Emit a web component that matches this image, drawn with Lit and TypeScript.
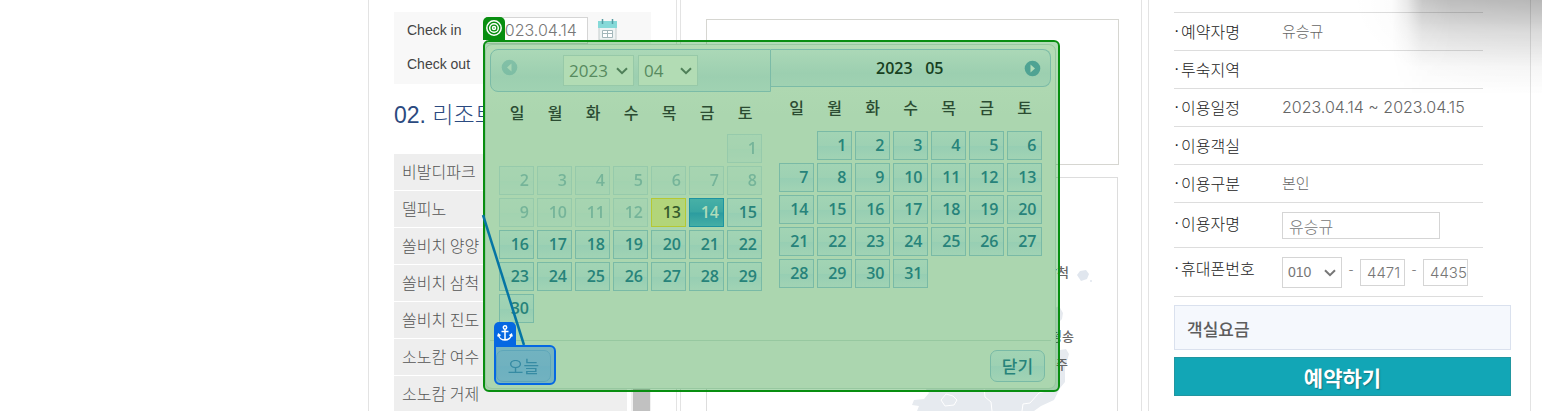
import { LitElement, html, svg, css, nothing } from "lit";
import { customElement, property } from "lit/decorators.js";

const WEEKDAYS = ["일", "월", "화", "수", "목", "금", "토"];

const chevron = html`<svg class="chevron" viewBox="0 0 12 8" aria-hidden="true"><path d="M1 1.2 6 6.2 11 1.2" /></svg>`;

@customElement("month-grid")
class MonthGrid extends LitElement {
  @property({ type: Number }) offset = 0;
  @property({ type: Number }) days = 30;
  @property({ type: Number }) today = 0;
  @property({ type: Number }) selected = 0;
  @property() label = "";

  static styles = css`
    :host { display: block; }
    table { table-layout: fixed; width: 266px; border-collapse: collapse; }
    th { height: 20px; padding: 0; font-weight: 500; font-size: 16px; line-height: 20px; color: #2b4c32; }
    td { height: 32px; padding: 0 2px 0 1px; vertical-align: top; }
    thead::after { content: ""; display: block; height: var(--head-gap, 12px); }
    .day {
      display: block; box-sizing: border-box; height: 29px; padding: 0 4px; text-align: right;
      border: 1px solid #79baa6; color: #27837a; text-decoration: none;
      font: 600 16px/27px "Open Sans", sans-serif;
      background: linear-gradient(#a2d4b4, #9dd1b3 50%, #96ceb3 51%, #a1d3b4);
    }
    .off { opacity: 0.4; }
    .today { background: #b2d57a; border-color: #b5c833; color: #355c2d; }
    .selected { background: linear-gradient(#47b0a6, #39a6a2 48%, #2c9c9f 52%, #45aea5); border-color: #1d93a1; color: #b0dcb9; }
  `;

  render() {
    const weeks = Math.ceil((this.offset + this.days) / 7);
    return html`<table aria-label=${this.label}>
      <thead><tr>${WEEKDAYS.map((d) => html`<th scope="col">${d}</th>`)}</tr></thead>
      <tbody>
        ${Array.from({ length: weeks }, (_, w) => html`<tr>
          ${WEEKDAYS.map((_d, i) => {
            const n = w * 7 + i - this.offset + 1;
            if (n < 1 || n > this.days) return html`<td></td>`;
            if (n < this.today) return html`<td><span class="day off">${n}</span></td>`;
            const kind = n === this.today ? "today" : n === this.selected ? "selected" : "";
            return html`<td><a class="day ${kind}" href="#">${n}</a></td>`;
          })}
        </tr>`)}
      </tbody>
    </table>`;
  }
}

@customElement("date-picker")
class DatePicker extends LitElement {
  static styles = css`
    :host { display: block; }
    .picker {
      box-sizing: border-box; height: 345px; padding: 4px; border: 1px solid #97c8a0; border-radius: 7px;
      display: flex; flex-direction: column; justify-content: space-between;
      background: linear-gradient(#b3dbb4, #abd6af 70px);
    }
    .months { display: grid; grid-template-columns: 1fr 1fr; align-items: start; }
    .bar {
      box-sizing: border-box; display: flex; align-items: center; border: 1px solid #7bbba7;
      background: linear-gradient(#abd8b7, #9ccfb0 65%, #a0d2b2);
    }
    .first { height: 43px; padding: 0 10px; gap: 4px; border-radius: 8px 0 0 8px; }
    .second { height: 38px; padding: 0 9px; border-left: 0; border-radius: 0 8px 8px 0; }
    .title { flex: 1; padding-left: 16px; text-align: center; white-space: pre; color: #17401f; font: 600 16px/20px "Open Sans", sans-serif; }
    .nav { width: 17px; height: 17px; padding: 0; border: 0; background: none; }
    .nav svg { display: block; }
    .prev { opacity: 0.4; align-self: flex-start; margin: 9px 41px 0 0; }
    .pick { position: relative; display: block; }
    .pick select {
      appearance: none; display: block; box-sizing: border-box; height: 31px; width: 71px; padding: 0 5px;
      border: 1px solid #97c9a8; border-radius: 0; background: #b2dcb4; color: #578a5f; font: 17px/29px "Open Sans", sans-serif;
    }
    .pick .narrow { width: 60px; }
    .chevron { position: absolute; right: 6px; top: 12px; width: 12px; height: 8px; fill: none; stroke: #4f7f58; stroke-width: 2; pointer-events: none; }
    .grid-a { padding: 10px 0 0 8px; --head-gap: 12px; }
    .grid-b { padding: 10px 0 0 7px; --head-gap: 14px; }
    .foot { display: flex; justify-content: space-between; padding: 9px 6px 2px; border-top: 1px solid #97c8a0; }
    .foot button {
      box-sizing: border-box; width: 55px; height: 32px; padding: 0; border: 1px solid #79baa6; border-radius: 7px;
      color: #27837a; font: 500 17px/28px "Noto Sans CJK KR", sans-serif;
      background: linear-gradient(#a2d4b4, #9dd1b3 50%, #96ceb3 51%, #a1d3b4);
    }
    .foot .now { font-weight: 400; opacity: 0.7; }
  `;

  arrow(d: string) {
    return html`<svg width="17" height="17" viewBox="0 0 17 17" aria-hidden="true"><circle cx="8.500" cy="8.500" r="7.800" fill="#4fa393" /><path d=${d} fill="#b2dcb8" /></svg>`;
  }

  render() {
    return html`<div class="picker">
      <div class="months">
        <section>
          <div class="bar first">
            <button class="nav prev" aria-label="이전 달">${this.arrow("M10.500 4.500v8L6 8.500z")}</button>
            <label class="pick"><select aria-label="년"><option>2023</option></select>${chevron}</label>
            <label class="pick"><select class="narrow" aria-label="월"><option>04</option></select>${chevron}</label>
          </div>
          <month-grid class="grid-a" label="2023 04" .offset=${6} .days=${30} .today=${13} .selected=${14}></month-grid>
        </section>
        <section>
          <div class="bar second">
            <div class="title">2023   05</div>
            <button class="nav" aria-label="다음 달">${this.arrow("M6.500 4.500v8L11 8.500z")}</button>
          </div>
          <month-grid class="grid-b" label="2023 05" .offset=${1} .days=${31}></month-grid>
        </section>
      </div>
      <div class="foot"><button class="now">오늘</button><button>닫기</button></div>
    </div>`;
  }
}

@customElement("app-root")
class AppRoot extends LitElement {
  static styles = css`
    :host { display: block; font-family: "Noto Sans CJK KR", sans-serif; color: #666; background: #fff; }
    * { box-sizing: border-box; }
    .page {
      position: relative; min-height: 100vh; overflow: hidden; padding: 0 11px 0 368px;
      display: grid; grid-template-columns: 309px minmax(0, 1fr) 386px; column-gap: 3px;
    }
    .col { border: solid #e3e3e3; border-width: 0 1px; }
    .resorts { padding: 12px 25px 0; }
    .dates { height: 72px; padding: 1px 13px 0; background: #f8f8f8; }
    .date-row { display: flex; align-items: center; height: 34px; font: 14px/34px "Liberation Sans", sans-serif; color: #444; }
    .date-row label { width: 79px; }
    .field { border: 1px solid #d5d5d5; border-radius: 0; background: #fff; color: #777; padding: 0 6px; height: 27px; font: 300 16px/25px "Noto Sans CJK KR", sans-serif; }
    .date { width: 102px; margin-right: 10px; padding: 0 8px; font-family: "Inter", sans-serif; }
    h2 { margin: 13px 0 20px; font: 300 23px/37px "Liberation Sans", "Noto Sans CJK KR", sans-serif; color: #2b4a80; }
    .scroller { display: flex; gap: 4px; height: 257px; }
    ul { flex: 1; margin: 0; padding: 0; list-style: none; }
    li { height: 36px; margin-bottom: 1px; padding: 0 8px; background: #eee; font-weight: 300; font-size: 16px; line-height: 34px; }
    li a { color: #555; text-decoration: none; }
    .track { width: 20px; padding: 0 1px 0 2px; background: #f1f1f1; }
    .thumb { height: 100%; background: #c1c1c1; }

    .map-col { padding: 19px 22px 0 25px; display: flex; flex-direction: column; gap: 12px; }
    .notice { height: 146px; border: 1px solid #d6d6d1; }
    .map { flex: 1; margin-right: 1px; border: solid #ddd; border-width: 1px 1px 0; overflow: hidden; }
    .map svg { display: block; }
    .place { font: 500 13px "Noto Sans CJK KR", sans-serif; fill: #666; }

    .booking { margin-left: 3px; padding: 12px 19px 0 25px; }
    dl { margin: 0 28px 8px 0; border-top: 1px solid #ddd; }
    .line { display: grid; grid-template-columns: 108px 1fr; border-bottom: 1px solid #ddd; line-height: 36px; height: 38px; }
    dt { display: flex; color: #222; font-weight: 300; font-size: 16px; white-space: nowrap; }
    dt::before { content: "·"; width: 7px; font-family: "Liberation Sans", sans-serif; }
    dd { margin: 0; font-weight: 300; font-size: 15px; white-space: nowrap; }
    .period { font-family: "Inter", sans-serif; font-size: 16px; }
    .user { height: 45px; line-height: 40px; }
    .user .field { display: block; width: 158px; margin-top: 9px; }
    .phone { height: 49px; line-height: 40px; }
    .numbers { display: flex; gap: 5px; align-items: flex-start; padding-top: 9px; }
    .numbers span { width: 8px; text-align: center; line-height: 24px; }
    .numbers .field { width: 45px; margin-top: 2px; padding: 0 0 0 6px; font-family: "Inter", sans-serif; font-size: 15px; }
    .prefix { position: relative; display: block; line-height: 0; }
    .prefix select { appearance: none; width: 60px; height: 31px; padding: 0 5px; border: 1px solid #d5d5d5; border-radius: 0; background: #fff; color: #777; font: 14px/29px "Liberation Sans", sans-serif; }
    .chevron { position: absolute; right: 6px; top: 12px; width: 12px; height: 8px; fill: none; stroke: #777; stroke-width: 2; pointer-events: none; }
    .fee { height: 45px; margin: 0 0 7px; padding: 0 12px; border: 1px solid #dae1ee; background: #f5f8fd; font-size: 17px; line-height: 45px; font-weight: 500; color: #5d5d5d; }
    .book { display: block; width: 100%; height: 39px; padding: 0; border: 1px solid #2196a0; background: #12a6b6; color: #fff; font: 700 21px/36px "Noto Sans CJK KR", sans-serif; text-shadow: 1px 1px 1px #14747e; }

    .shade { position: absolute; top: 0; right: 0; width: 190px; height: 96px; pointer-events: none; background: radial-gradient(farthest-side at 100% 0, rgba(0, 0, 0, 0.06), transparent); }
    .shade::before {
      content: ""; display: block; margin-left: 40px; height: 100%;
      background: linear-gradient(rgba(0, 0, 0, 0.24), rgba(0, 0, 0, 0.1) 35%, rgba(0, 0, 0, 0.02) 70%, transparent);
      mask-image: linear-gradient(to right, transparent, rgba(0, 0, 0, 0.3) 15px, rgba(0, 0, 0, 0.85) 30px, #000 60px);
    }
    .frame { position: absolute; left: 483px; top: 40px; width: 577px; padding: 2px 2px 0 0; border: 2px solid #088e10; border-radius: 6px; background: rgba(0, 140, 16, 0.3); height: 352px; }
    .target { position: absolute; left: 494px; top: 345px; width: 62px; height: 40px; border: 2px solid #0568e2; border-radius: 0 6px 6px 6px; background: rgba(0, 104, 226, 0.3); pointer-events: none; }
    .tag { position: absolute; width: 22px; height: 23px; padding: 2px; border-radius: 5px 5px 0 0; fill: none; stroke: #fff; }
    .green { left: 483px; top: 17px; background: #088e10; }
    .blue { left: 494px; top: 322px; background: #0568e2; }
    .tag svg, .link { display: block; }
    .link { position: absolute; left: 480px; top: 213px; pointer-events: none; }
  `;

  calendarIcon() {
    return html`<svg width="19" height="22" viewBox="0 0 19 22" aria-hidden="true">
      <path d="M1 8h17v13H1z" fill="#eef3f3" stroke="#c4cccc" /><path d="M0 2h19v7H0z" fill="#85d9d8" />
      <path d="M4.500 0v5M14.500 0v5" stroke="#549da3" stroke-width="1.500" />
      <path d="M4.500 11.500h10v7h-10zM4.500 14.500h10M9.500 11.500v7" fill="#fff" stroke="#a3b7ba" />
    </svg>`;
  }

  row(label: string, value: unknown = nothing, kind = "") {
    return html`<div class="line"><dt>${label}</dt><dd class=${kind}>${value}</dd></div>`;
  }

  render() {
    const resorts = ["비발디파크", "델피노", "쏠비치 양양", "쏠비치 삼척", "쏠비치 진도", "소노캄 여수", "소노캄 거제"];
    return html`<main class="page">
      <section class="col resorts">
        <div class="dates">
          <div class="date-row"><label for="in">Check in</label><input id="in" class="field date" value="2023.04.14" />${this.calendarIcon()}</div>
          <div class="date-row"><span>Check out</span></div>
        </div>
        <h2>02. 리조트</h2>
        <div class="scroller">
          <ul>${resorts.map((r) => html`<li><a href="#">${r}</a></li>`)}</ul>
          <div class="track"><div class="thumb"></div></div>
        </div>
      </section>

      <section class="col map-col">
        <div class="notice"></div>
        <div class="map">
          <svg width="410" height="233" viewBox="707 178 410 233" aria-hidden="true">
            ${svg`
              <path d="M925 388 1048 388 1056 350 1055 308 1059 306 1063 313 1062 319 1059 322 1060 350 1066 349 1069 354 1065 368 1065 382 1060 388 1054 400 1041 406 1034 411H917L919 406 912 405 914 400 924 399 929 393z" fill="#e6eaef" />
              <path d="M941 400l5-6 7 2 4 4-3 5-9 1zM984 388l1 9 6 5 1 9M1046 391l-7 2-9 10-7 1-1 7" fill="none" stroke="#fff" />
              <path d="M1077 275l3-4 6-1 3 4-2 5-6 2z" fill="#e0e6ee" /><circle cx="1091" cy="281" r="1" fill="#e0e6ee" />
              <text class="place" text-anchor="end" x="1069" y="277">삼척</text>
              <text class="place" text-anchor="end" x="1074" y="341">청송</text>
              <text class="place" text-anchor="end" x="1068" y="369">경주</text>`}
          </svg>
        </div>
      </section>

      <section class="col booking">
        <dl>
          ${this.row("예약자명", "유승규")} ${this.row("투숙지역")}
          ${this.row("이용일정", "2023.04.14 ~ 2023.04.15", "period")}
          ${this.row("이용객실")} ${this.row("이용구분", "본인")}
          <div class="line user"><dt><label for="user">이용자명</label></dt><dd><input id="user" class="field" value="유승규" /></dd></div>
          <div class="line phone"><dt><label for="prefix">휴대폰번호</label></dt>
            <dd class="numbers">
              <div class="prefix"><select id="prefix"><option>010</option></select>${chevron}</div>
              <span>-</span><input class="field" aria-label="휴대폰번호 가운데" value="4471" />
              <span>-</span><input class="field" aria-label="휴대폰번호 끝" value="4435" />
            </dd>
          </div>
        </dl>
        <p class="fee">객실요금</p>
        <button class="book">예약하기</button>
      </section>

      <div class="shade"></div>
      <div class="frame"><date-picker></date-picker></div>
      <svg class="link" width="50" height="135" aria-hidden="true"><path d="M3 2 44 132" stroke="#0575a4" stroke-width="2.500" /></svg>
      <div class="tag green"><svg width="18" height="18" viewBox="0 0 18 18" stroke-width="1.500"><circle cx="9" cy="9" r="7.200" /><circle cx="9" cy="9" r="4.300" /><circle cx="9" cy="9" r="1.500" /></svg></div>
      <div class="target"></div>
      <div class="tag blue"><svg width="18" height="18" viewBox="0 0 18 18" stroke-width="1.500"><circle cx="9" cy="3.500" r="1.700" /><path d="M9 5.200V16M5.500 7.500h7M2.500 10.500C3 14 6 16 9 16s6-2 6.500-5.500M1.800 12.500l.7-2.300 2 1.500M16.200 12.500l-.7-2.300-2 1.500" /></svg></div>
    </main>`;
  }
}
